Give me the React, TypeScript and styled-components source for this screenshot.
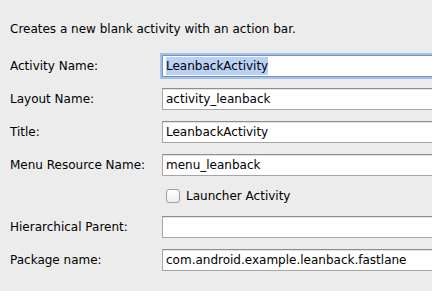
import React from 'react';
import styled, { createGlobalStyle } from 'styled-components';

const GlobalStyle = createGlobalStyle`
  html, body {
    margin: 0;
    padding: 0;
    background: #ececec;
    overflow: hidden;
  }
`

const Page = styled.div`
  width: 432px;
  height: 291px;
  padding: 21px 0 0 10px;
  box-sizing: border-box;
  overflow: hidden;
  font-family: "DejaVu Sans", "Liberation Sans", sans-serif;
  font-size: 12px;
  color: #000;
  background: #ececec;
`

const Description = styled.div`
  line-height: 16px;
  height: 16px;
  margin-bottom: 18px;
`

const Form = styled.div`
  display: grid;
  grid-template-columns: 152px 1fr;
  row-gap: 11px;
  align-items: center;
`

const Label = styled.div`
  line-height: 22px;
`

const Field = styled.div<{ $focused?: boolean }>`
  width: 290px;
  height: 22px;
  box-sizing: border-box;
  border: 1px solid ${p => (p.$focused ? '#6f93d0' : '#a6a6a6')};
  border-top-color: ${p => (p.$focused ? '#6f93d0' : '#8e8e8e')};
  background: #fff;
  padding: 0 3px;
  line-height: 20px;
  white-space: nowrap;
  box-shadow: ${p => (p.$focused ? '0 0 0 2px #a6c0ea' : 'inset 0 1px 0 #e2e2e2')};
`

const Selected = styled.span`
  background: #b9d1f5;
  display: inline-block;
  line-height: 18px;
`

const CheckRow = styled.label`
  grid-column: 2;
  display: flex;
  align-items: center;
  gap: 6px;
  height: 18px;
  padding-left: 4px;
`

const Box = styled.span`
  width: 14px;
  height: 14px;
  box-sizing: border-box;
  border: 1px solid #9c9c9c;
  border-radius: 3px;
  background: linear-gradient(#ffffff, #eeeeee);
`

const rows: { label: string; value: string; focused?: boolean }[] = [
  { label: 'Activity Name:', value: 'LeanbackActivity', focused: true },
  { label: 'Layout Name:', value: 'activity_leanback' },
  { label: 'Title:', value: 'LeanbackActivity' },
  { label: 'Menu Resource Name:', value: 'menu_leanback' },
]

function App() {
  return (
    <Page>
      <GlobalStyle />
      <Description>Creates a new blank activity with an action bar.</Description>
      <Form>
        {rows.map(r => (
          <React.Fragment key={r.label}>
            <Label>{r.label}</Label>
            <Field $focused={r.focused}>
              {r.focused ? <Selected>{r.value}</Selected> : r.value}
            </Field>
          </React.Fragment>
        ))}
        <CheckRow>
          <Box />
          Launcher Activity
        </CheckRow>
        <Label>Hierarchical Parent:</Label>
        <Field />
        <Label>Package name:</Label>
        <Field>com.android.example.leanback.fastlane</Field>
      </Form>
    </Page>
  );
}

export default App;
